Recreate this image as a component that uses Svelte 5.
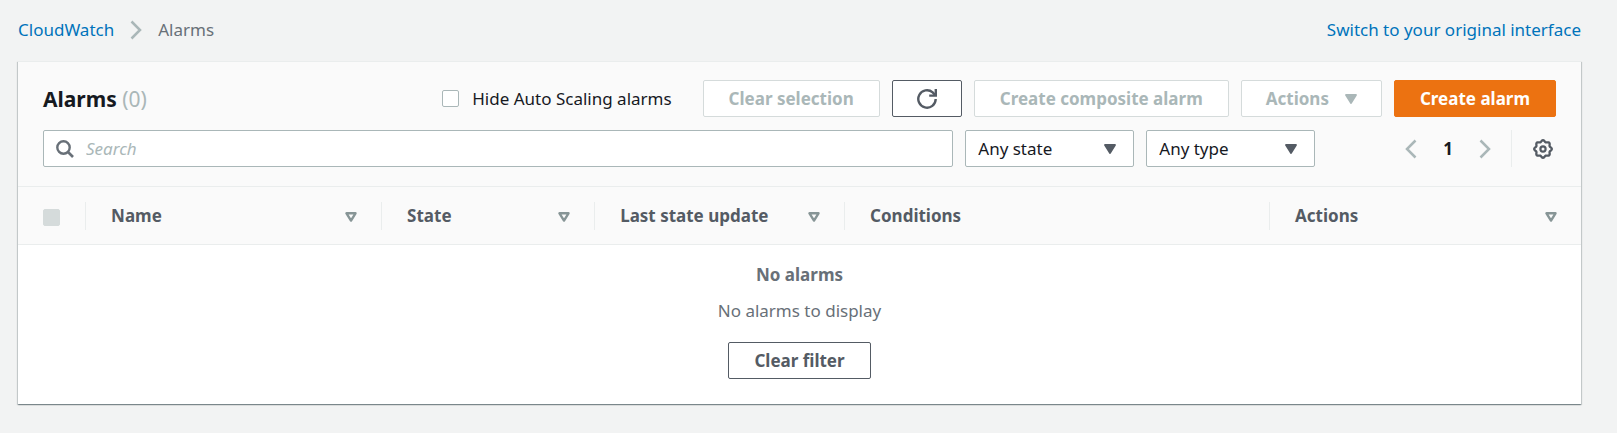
<script>
  let hideScaling = $state(false);
  let query = $state('');
  let stateFilter = $state('Any state');
  let typeFilter = $state('Any type');

  const columns = [
    { label: 'Name', share: 18.94, sortable: true },
    { label: 'State', share: 13.63, sortable: true },
    { label: 'Last state update', share: 15.99, sortable: true },
    { label: 'Conditions', share: 27.19, sortable: false },
    { label: 'Actions', share: 19.96, sortable: true }
  ];

  // Outline of the eight-toothed settings gear
  const gear = Array.from({ length: 96 }, (_, i) => {
    const a = (i / 96) * Math.PI * 2;
    const r = 8 + 0.8 * Math.cos(8 * a);
    return `${(10 + r * Math.cos(a)).toFixed(2)} ${(10 + r * Math.sin(a)).toFixed(2)}`;
  }).join('L');

  function clearFilter() {
    query = '';
    stateFilter = 'Any state';
    typeFilter = 'Any type';
  }
</script>

{#snippet caret()}
  <svg class="caret" width="12" height="10" viewBox="0 0 12 10" aria-hidden="true">
    <path d="M1 1h10L6 9z" fill="currentColor" stroke="currentColor" stroke-width="1.8" stroke-linejoin="round" />
  </svg>
{/snippet}

{#snippet chevron(path)}
  <svg width="12" height="20" viewBox="0 0 12 20" aria-hidden="true">
    <path d={path} fill="none" stroke="currentColor" stroke-width="2.5" />
  </svg>
{/snippet}

<main>
  <div class="topbar">
    <nav aria-label="Breadcrumb">
      <a href="#cloudwatch">CloudWatch</a>
      {@render chevron('M1.5 1.5L10 10l-8.5 8.5')}
      <span>Alarms</span>
    </nav>
    <a href="#original">Switch to your original interface</a>
  </div>

  <section class="card">
    <header>
      <div class="row">
        <h1>Alarms <span>(0)</span></h1>
        <label class="check">
          <input type="checkbox" bind:checked={hideScaling} />
          Hide Auto Scaling alarms
        </label>
        <div class="actions">
          <button class="btn" disabled>Clear selection</button>
          <button class="btn with-icon" aria-label="Refresh">
            <svg width="20" height="20" viewBox="0 0 20 20" aria-hidden="true">
              <path d="M18.7 10a8.7 8.7 0 1 1-3-6.6L18 6" fill="none" stroke="currentColor" stroke-width="2.4" />
              <path d="M18.8 0v6.6h-6.6" fill="none" stroke="currentColor" stroke-width="2.4" />
            </svg>
          </button>
          <button class="btn" disabled>Create composite alarm</button>
          <button class="btn with-icon" disabled>Actions {@render caret()}</button>
          <button class="btn primary">Create alarm</button>
        </div>
      </div>
      <div class="row filters">
        <div class="search">
          <svg width="18" height="18" viewBox="0 0 18 18" aria-hidden="true">
            <circle cx="7.5" cy="7.5" r="6.2" fill="none" stroke="currentColor" stroke-width="2.4" />
            <path d="M12 12l5 5" stroke="currentColor" stroke-width="2.6" />
          </svg>
          <input type="text" placeholder="Search" aria-label="Search" bind:value={query} />
        </div>
        <div class="select">
          <select aria-label="State" bind:value={stateFilter}><option>Any state</option></select>
          {@render caret()}
        </div>
        <div class="select">
          <select aria-label="Type" bind:value={typeFilter}><option>Any type</option></select>
          {@render caret()}
        </div>
        <div class="pager">
          <button class="icon" aria-label="Previous page" disabled>{@render chevron('M10.5 1.5L2 10l8.5 8.5')}</button>
          <button class="icon page">1</button>
          <button class="icon" aria-label="Next page" disabled>{@render chevron('M1.5 1.5L10 10l-8.5 8.5')}</button>
        </div>
        <div class="settings">
          <button class="icon" aria-label="Preferences">
            <svg width="20" height="20" viewBox="0 0 20 20" aria-hidden="true">
              <path d="M{gear}Z" fill="none" stroke="currentColor" stroke-width="2.3" />
              <circle cx="10" cy="10" r="2.6" fill="none" stroke="currentColor" stroke-width="2.2" />
            </svg>
          </button>
        </div>
      </div>
    </header>

    <table>
      <colgroup>
        <col class="pick" />
        {#each columns as c}<col style="width: {c.share}%" />{/each}
      </colgroup>
      <thead>
        <tr>
          <th><div class="cell first"><input type="checkbox" aria-label="Select all alarms" disabled /></div></th>
          {#each columns as c}
            <th scope="col">
              <div class="cell">
                {c.label}
                {#if c.sortable}
                  <button class="icon sort" aria-label="Sort by {c.label}">
                    <svg width="12" height="10" viewBox="0 0 12 10" aria-hidden="true">
                      <path d="M1.5 1.3h9L6 8.6z" fill="none" stroke="currentColor" stroke-width="2.4" stroke-linejoin="round" />
                    </svg>
                  </button>
                {/if}
              </div>
            </th>
          {/each}
        </tr>
      </thead>
      <tbody>
        <tr>
          <td colspan="6">
            <div class="empty">
              <strong>No alarms</strong>
              <p>No alarms to display</p>
              <button class="btn" onclick={clearFilter}>Clear filter</button>
            </div>
          </td>
        </tr>
      </tbody>
    </table>
  </section>
</main>

<style>
  :global(body) {
    margin: 0;
    background: #f2f3f3;
  }
  main {
    box-sizing: border-box;
    padding: 16px 36px 30px 18px;
    font: 17px/28px "Noto Sans", sans-serif;
    color: #16191f;
  }
  main * {
    box-sizing: border-box;
  }
  svg {
    display: block;
    flex: none;
  }
  a {
    color: #0073bb;
    text-decoration: none;
  }
  button,
  input,
  select {
    font: inherit;
    color: inherit;
    margin: 0;
  }
  .topbar {
    display: flex;
    justify-content: space-between;
    margin-bottom: 17px;
  }
  nav {
    display: flex;
    align-items: center;
    gap: 16px;
    color: #687078;
  }
  nav svg {
    color: #aab7b8;
  }
  .card {
    background: #fff;
    box-shadow: 0 1px 1px 0 rgba(0, 28, 36, 0.3), 1px 1px 1px 0 rgba(0, 28, 36, 0.15), -1px 1px 1px 0 rgba(0, 28, 36, 0.15);
    border-top: 1px solid #eaeded;
  }
  header {
    display: flex;
    flex-direction: column;
    gap: 13px;
    padding: 18px 25px 19px;
    background: #fafafa;
    border-bottom: 1px solid #eaeded;
  }
  .row {
    display: flex;
    align-items: center;
  }
  h1 {
    flex: 1;
    margin: 0;
    font-size: 21px;
    line-height: 28px;
    font-weight: 700;
  }
  h1 span {
    font-weight: 400;
    color: #aab7b8;
  }
  .check {
    display: flex;
    align-items: center;
    gap: 13px;
    margin-right: 31px;
  }
  input[type='checkbox'] {
    appearance: none;
    width: 17px;
    height: 17px;
    border: 1px solid #aab7b8;
    border-radius: 2px;
    background: #fff;
  }
  input[type='checkbox']:disabled {
    background: #d5dbdb;
    border-color: #d5dbdb;
  }
  .actions {
    display: flex;
    gap: 12px;
  }
  .btn {
    display: flex;
    align-items: center;
    justify-content: center;
    gap: 16px;
    height: 37px;
    padding: 0 25px;
    border: 1px solid #545b64;
    border-radius: 2px;
    background: #fff;
    color: #545b64;
    font-weight: 700;
    white-space: nowrap;
  }
  .with-icon {
    padding: 0 24px;
  }
  .btn:disabled {
    border-color: #d5dbdb;
    color: #aab7b8;
  }
  .btn.primary {
    background: #ec7211;
    border-color: #ec7211;
    color: #fff;
  }
  .filters {
    gap: 12px;
  }
  .search {
    flex: 1;
    display: flex;
    align-items: center;
    gap: 12px;
    height: 37px;
    padding: 0 12px;
    border: 1px solid #aab7b8;
    border-radius: 2px;
    background: #fff;
    color: #687078;
  }
  .search input {
    flex: 1;
    min-width: 0;
    padding: 0;
    border: 0;
    outline: 0;
    background: none;
    color: #16191f;
  }
  .search input::placeholder {
    color: #aab7b8;
    font-style: italic;
    opacity: 1;
  }
  .select {
    display: grid;
    align-items: center;
    width: 169px;
  }
  .select > :global(*) {
    grid-area: 1 / 1;
  }
  .select select {
    appearance: none;
    width: 100%;
    height: 37px;
    padding: 0 36px 0 12px;
    border: 1px solid #aab7b8;
    border-radius: 2px;
    background: #fff;
  }
  .select .caret {
    justify-self: end;
    margin-right: 18px;
    color: #545b64;
    pointer-events: none;
  }
  .icon {
    display: flex;
    align-items: center;
    justify-content: center;
    padding: 0;
    border: 0;
    background: none;
    color: #545b64;
  }
  .icon:disabled {
    color: #aab7b8;
  }
  .pager {
    display: flex;
    gap: 26px;
    margin: 0 8px 0 78px;
  }
  .page {
    color: #16191f;
    font-weight: 700;
  }
  .settings {
    display: flex;
    height: 37px;
    padding: 0 3px 0 21px;
    border-left: 1px solid #eaeded;
  }
  table {
    width: 100%;
    table-layout: fixed;
    border-collapse: collapse;
  }
  .pick {
    width: 67px;
  }
  th {
    padding: 15px 0 14px;
    background: #fafafa;
    border-bottom: 1px solid #eaeded;
    color: #545b64;
    text-align: left;
  }
  .cell {
    display: flex;
    align-items: center;
    justify-content: space-between;
    height: 28px;
    padding: 0 24px 0 25px;
    border-left: 1px solid #eaeded;
    white-space: nowrap;
  }
  .first {
    border: 0;
  }
  .cell input,
  .sort {
    margin-top: 2px;
  }
  .sort {
    color: #879596;
  }
  td {
    padding: 0;
  }
  .empty {
    display: flex;
    flex-direction: column;
    align-items: center;
    padding: 16px 0 25px;
    color: #687078;
  }
  .empty p {
    margin: 8px 0 17px;
  }
</style>
